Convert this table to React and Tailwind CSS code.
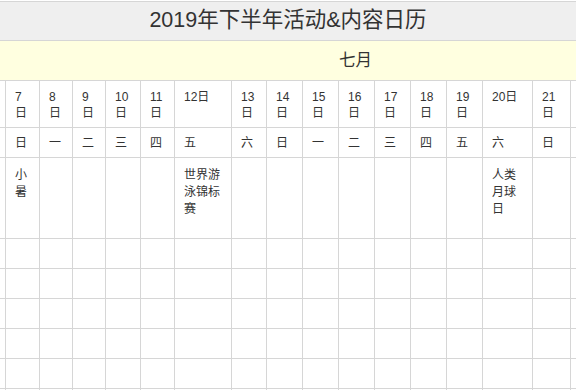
import React from "react";

const cols = [
  { w: 6, d: "", wd: "", pre: true },
  { w: 34, d: "7", wd: "日", ev: "小暑" },
  { w: 33, d: "8", wd: "一" },
  { w: 33, d: "9", wd: "二" },
  { w: 35, d: "10", wd: "三" },
  { w: 34, d: "11", wd: "四" },
  { w: 57, d: "12", wd: "五", ev: "世界游泳锦标赛" },
  { w: 35, d: "13", wd: "六" },
  { w: 36, d: "14", wd: "日" },
  { w: 36, d: "15", wd: "一" },
  { w: 36, d: "16", wd: "二" },
  { w: 36, d: "17", wd: "三" },
  { w: 36, d: "18", wd: "四" },
  { w: 36, d: "19", wd: "五" },
  { w: 50, d: "20", wd: "六", ev: "人类月球日" },
  { w: 38, d: "21", wd: "日" },
  { w: 36, d: "", wd: "" },
];

const font = { fontFamily: '"Liberation Sans", Arial, "Noto Sans CJK SC", sans-serif' };

export default function App() {
  return (
    <div className="w-[576px] h-[390px] overflow-hidden bg-white text-[#333]" style={font}>
      <div className="mt-px h-[40px] border-t border-b border-[#d6d6d6] bg-[#efefef] flex items-center justify-center text-[21.5px] leading-none">
        2019年下半年活动&amp;内容日历
      </div>
      <div className="h-[40px] border-b border-[#d6d6d6] bg-[#ffffe0] flex items-center pl-[339px] text-[16.5px]">
        七月
      </div>
      <div className="flex w-max">
        {cols.map((c, i) => (
          <div key={i} className="flex flex-col shrink-0" style={{ width: c.w }}>
            <div className={"h-[47px] border-r border-b border-[#d6d6d6] text-[12px] leading-[16px] break-all " + (c.pre ? "" : "pl-[9px] pr-[8px] pt-[8px]")}>
              {c.d ? c.d + "日" : ""}
            </div>
            <div className={"h-[30px] border-r border-b border-[#d6d6d6] flex items-center text-[12px] " + (c.pre ? "" : "pl-[9px]")}>
              {c.wd}
            </div>
            <div className={"h-[81px] border-r border-b border-[#d6d6d6] text-[12px] leading-[17px] break-all " + (c.pre ? "" : "pl-[9px] pr-[8px] pt-[9px]")}>
              {c.ev || ""}
            </div>
            {[0, 1, 2, 3, 4, 5].map((r) => (
              <div key={r} className="h-[30px] border-r border-b border-[#d6d6d6]" />
            ))}
          </div>
        ))}
      </div>
    </div>
  );
}
